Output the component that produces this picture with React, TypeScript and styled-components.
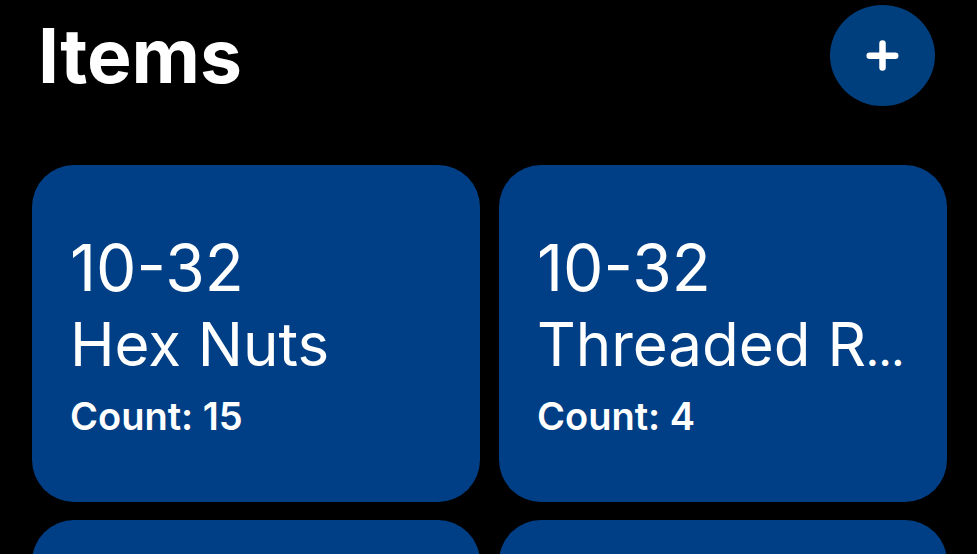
import React from "react";
import styled, { createGlobalStyle } from "styled-components";

const GlobalStyle = createGlobalStyle`
  * { box-sizing: border-box; }
  html, body, #root { height: 100%; }
  body { margin: 0; background: #000; color: #fff; font-family: Inter, sans-serif; overflow: hidden; }
`;

const Page = styled.main`
  height: 100%;
  overflow: hidden;
  padding: 5px 30px 0 32px;
`;

const Header = styled.header`
  display: flex;
  align-items: center;
  justify-content: space-between;
  padding: 0 12px 0 6px;
  margin-bottom: 59px;
`;

const Title = styled.h1`
  margin: 0;
  font-size: 75px;
  line-height: 100px;
  font-weight: 700;
`;

const AddButton = styled.button`
  display: flex;
  align-items: center;
  justify-content: center;
  width: 105px;
  height: 101px;
  padding: 0;
  border: 0;
  border-radius: 50%;
  background: #003f7e;
  color: #fff;
`;

const Grid = styled.ul`
  display: grid;
  grid-template-columns: repeat(2, minmax(0, 1fr));
  gap: 18px 19px;
  margin: 0;
  padding: 0;
  list-style: none;
`;

const Card = styled.li`
  min-height: 337px;
  padding: 65px 24px 51px 38px;
  border-radius: 42px;
  background: #003f85;
`;

const Size = styled.p`
  margin: 0;
  font-size: 64px;
  line-height: 76px;
  font-weight: 400;
`;

const Name = styled.p`
  margin: 0;
  font-size: 60px;
  line-height: 76px;
  font-weight: 400;
  white-space: nowrap;
`;

const Ellipsis = styled.span`
  font-size: 40px;
  line-height: 1;
  font-weight: 600;
`;

const Count = styled.p`
  margin: 0;
  font-size: 38px;
  line-height: 68px;
  font-weight: 600;
`;

const items = [
  { size: "10-32", name: "Hex Nuts", truncated: false, count: 15 },
  { size: "10-32", name: "Threaded R", truncated: true, count: 4 },
];

export default function App() {
  return (
    <>
      <GlobalStyle />
      <Page>
        <Header>
          <Title>Items</Title>
          <AddButton type="button" aria-label="Add item">
            <svg width="34" height="34" viewBox="0 0 34 34" fill="none" stroke="currentColor" strokeWidth="6.5" strokeLinecap="round" aria-hidden="true">
              <path d="M16.500 4.500v24M3.700 16.700h25.500" />
            </svg>
          </AddButton>
        </Header>
        <Grid>
          {items.map((item) => (
            <Card key={item.name}>
              <Size>{item.size}</Size>
              <Name>
                {item.name}
                {item.truncated && <Ellipsis>…</Ellipsis>}
              </Name>
              <Count>Count: {item.count}</Count>
            </Card>
          ))}
          <Card />
          <Card />
        </Grid>
      </Page>
    </>
  );
}
